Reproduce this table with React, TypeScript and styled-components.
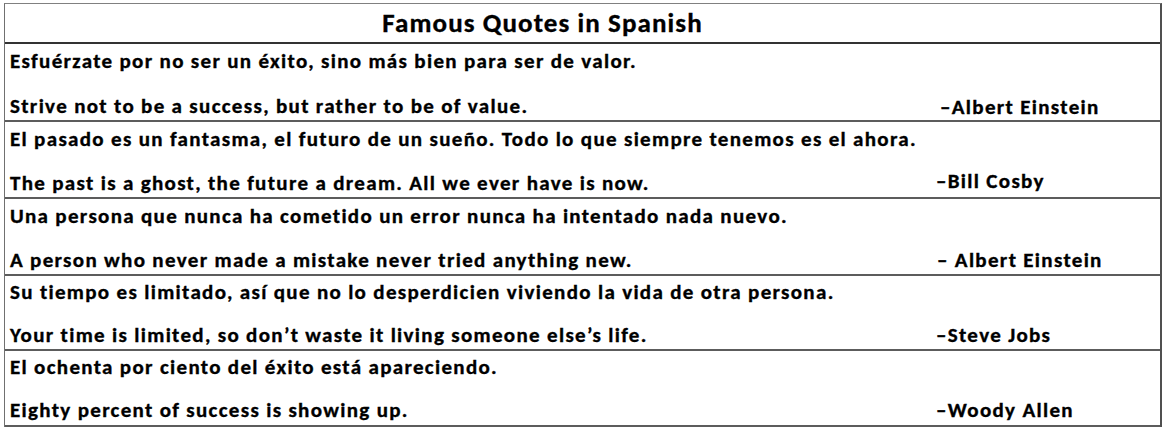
import React from "react";
import styled, { createGlobalStyle } from "styled-components";

const GlobalStyle = createGlobalStyle`
  html, body { margin: 0; padding: 0; background: #ffffff; }
  body { font-family: "Carlito", "Calibri", "Open Sans", sans-serif; color: #000; }
`;

const Table = styled.div`
  box-sizing: border-box;
  width: 1158px;
  margin: 3px 0 0 4px;
  border-top: 1px solid #808080;
  border-left: 1px solid #707070;
  border-right: 2px solid #505050;
  display: flex;
  flex-direction: column;
`;

const Header = styled.div`
  box-sizing: border-box;
  height: 40px;
  padding: 2px 80px 0 0;
  border-bottom: 2px solid #333;
  text-align: center;
  font-weight: 700;
  font-size: 27px;
  line-height: 34px;
  letter-spacing: 1.1px;
  -webkit-text-stroke: 0.35px #000;
`;

const Row = styled.div<{ $h: number; $top: number; $gap: number }>`
  box-sizing: border-box;
  height: ${(p) => p.$h}px;
  padding: ${(p) => p.$top}px 0 0 5px;
  border-bottom: 2px solid #5c5c5c;
  display: grid;
  grid-template-columns: 926px 1fr;
  grid-template-rows: 22px 22px;
  row-gap: ${(p) => p.$gap}px;
  font-weight: 700;
  font-size: 21px;
  line-height: 22px;
  letter-spacing: 1.32px;
  white-space: nowrap;
  -webkit-text-stroke: 0.35px #000;
`;

const Spanish = styled.div`
  grid-column: 1 / span 2;
`;

const English = styled.div``;

const Author = styled.div<{ $shift: number; $drop: number }>`
  padding-left: ${(p) => p.$shift}px;
  transform: translateY(${(p) => p.$drop}px);
`;

type Quote = {
  es: string;
  en: string;
  by: string;
  h: number;
  top: number;
  gap: number;
  shift: number;
  drop: number;
};

const quotes: Quote[] = [
  {
    es: "Esfuérzate por no ser un éxito, sino más bien para ser de valor.",
    en: "Strive not to be a success, but rather to be of value.",
    by: "–Albert Einstein",
    h: 78, top: 6, gap: 23, shift: 4, drop: 1,
  },
  {
    es: "El pasado es un fantasma, el futuro de un sueño. Todo lo que siempre tenemos es el ahora.",
    en: "The past is a ghost, the future a dream. All we ever have is now.",
    by: "–Bill Cosby",
    h: 77, top: 6, gap: 22, shift: 0, drop: -2,
  },
  {
    es: "Una persona que nunca ha cometido un error nunca ha intentado nada nuevo.",
    en: "A person who never made a mistake never tried anything new.",
    by: "– Albert Einstein",
    h: 77, top: 6, gap: 22, shift: 1, drop: 0,
  },
  {
    es: "Su tiempo es limitado, así que no lo desperdicien viviendo la vida de otra persona.",
    en: "Your time is limited, so don’t waste it living someone else’s life.",
    by: "–Steve Jobs",
    h: 75, top: 5, gap: 21, shift: 0, drop: 0,
  },
  {
    es: "El ochenta por ciento del éxito está apareciendo.",
    en: "Eighty percent of success is showing up.",
    by: "–Woody Allen",
    h: 76, top: 5, gap: 21, shift: 0, drop: 0,
  },
];

export default function App() {
  return (
    <>
      <GlobalStyle />
      <Table>
        <Header>Famous Quotes in Spanish</Header>
        {quotes.map((q) => (
          <Row key={q.by + q.en} $h={q.h} $top={q.top} $gap={q.gap}>
            <Spanish>{q.es}</Spanish>
            <English>{q.en}</English>
            <Author $shift={q.shift} $drop={q.drop}>{q.by}</Author>
          </Row>
        ))}
      </Table>
    </>
  );
}
